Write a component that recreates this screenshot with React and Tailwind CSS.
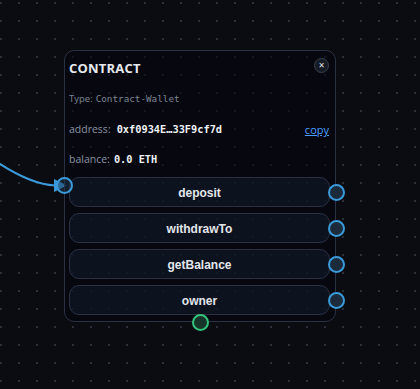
import React from 'react';

const methods = ['deposit', 'withdrawTo', 'getBalance', 'owner'];

const Handle = ({ className }) => (
  <div
    className={`absolute w-[17px] h-[17px] rounded-full border-2 ${className}`}
  />
);

const App = () => {
  return (
    <div className="relative w-[420px] h-[389px] overflow-hidden bg-[#0a0c12] bg-[radial-gradient(circle,#2a2f3a_1px,transparent_1.2px)] bg-[size:18px_18px] bg-[position:-8px_-6px]">
      {/* incoming edge */}
      <svg className="absolute left-0 top-0" width="420" height="389">
        <path d="M -20 150 Q 25 184 55 185.5" fill="none" stroke="#3b9ad9" strokeWidth="2" />
        <polygon points="54,179 54,192 67,185.5" fill="#3b9ad9" />
      </svg>

      {/* node */}
      <div className="absolute left-[64px] top-[50px] w-[272px] h-[272px] rounded-[10px] border border-[#2a3142] bg-[#05070d]/60 pl-[4px] pr-[5px] pt-[3px] font-['Open_Sans',sans-serif]">
        <div className="h-[30px] flex items-center justify-between">
          <span className="text-[13px] font-bold text-[#e6e9f0] tracking-[0.2px]">CONTRACT</span>
          <button className="w-[15px] h-[15px] mr-[1px] -mt-[8px] rounded-full border border-[#3a404d] bg-[#161a24] text-[#e6e9f0] text-[10px] leading-none flex items-center justify-center">
            ×
          </button>
        </div>
        <div className="h-[30px] flex items-center text-[9.5px] text-[#7d8594]">
          <span>Type:</span>
          <span className="ml-[3px] font-['DejaVu_Sans_Mono',monospace] text-[9.3px]">Contract-Wallet</span>
        </div>
        <div className="h-[30px] flex items-center text-[10.5px] pt-[1px]">
          <span className="text-[#8a93a3]">address:</span>
          <span className="ml-[6px] font-['DejaVu_Sans_Mono',monospace] text-[10.3px] font-bold text-[#eef1f6]">0xf0934E…33F9cf7d</span>
          <span className="ml-auto mr-[1px] mt-[2px] text-[#4a9eff] underline text-[11px]">copy</span>
        </div>
        <div className="h-[30px] flex items-center text-[10.5px] pt-[1px]">
          <span className="text-[#8a93a3]">balance:</span>
          <span className="ml-[4px] font-['DejaVu_Sans_Mono',monospace] text-[10.3px] font-bold text-[#eef1f6]">0.0 ETH</span>
        </div>
        <div className="mt-[3px] flex flex-col gap-[6px]">
          {methods.map((m) => (
            <div
              key={m}
              className="h-[30px] pt-[2px] rounded-[10px] border border-[#283042] bg-[#131a28]/60 flex items-center justify-center font-['Liberation_Sans',Arial,sans-serif] text-[12px] font-bold text-[#e3e6ec]"
            >
              {m}
            </div>
          ))}
        </div>
      </div>

      {/* handles */}
      <Handle className="left-[55.5px] top-[177px] border-[#3b9ad9] bg-[#1c3550]/50" />
      {[184, 220, 256, 292].map((t) => (
        <div
          key={t}
          style={{ top: t }}
          className="absolute left-[327.5px] w-[17px] h-[17px] rounded-full border-2 border-[#3b9ad9] bg-[#1b2b3c]"
        />
      ))}
      <Handle className="left-[191.5px] top-[313.5px] border-[#35c27c] bg-[#163427]" />
    </div>
  );
};

export default App;
